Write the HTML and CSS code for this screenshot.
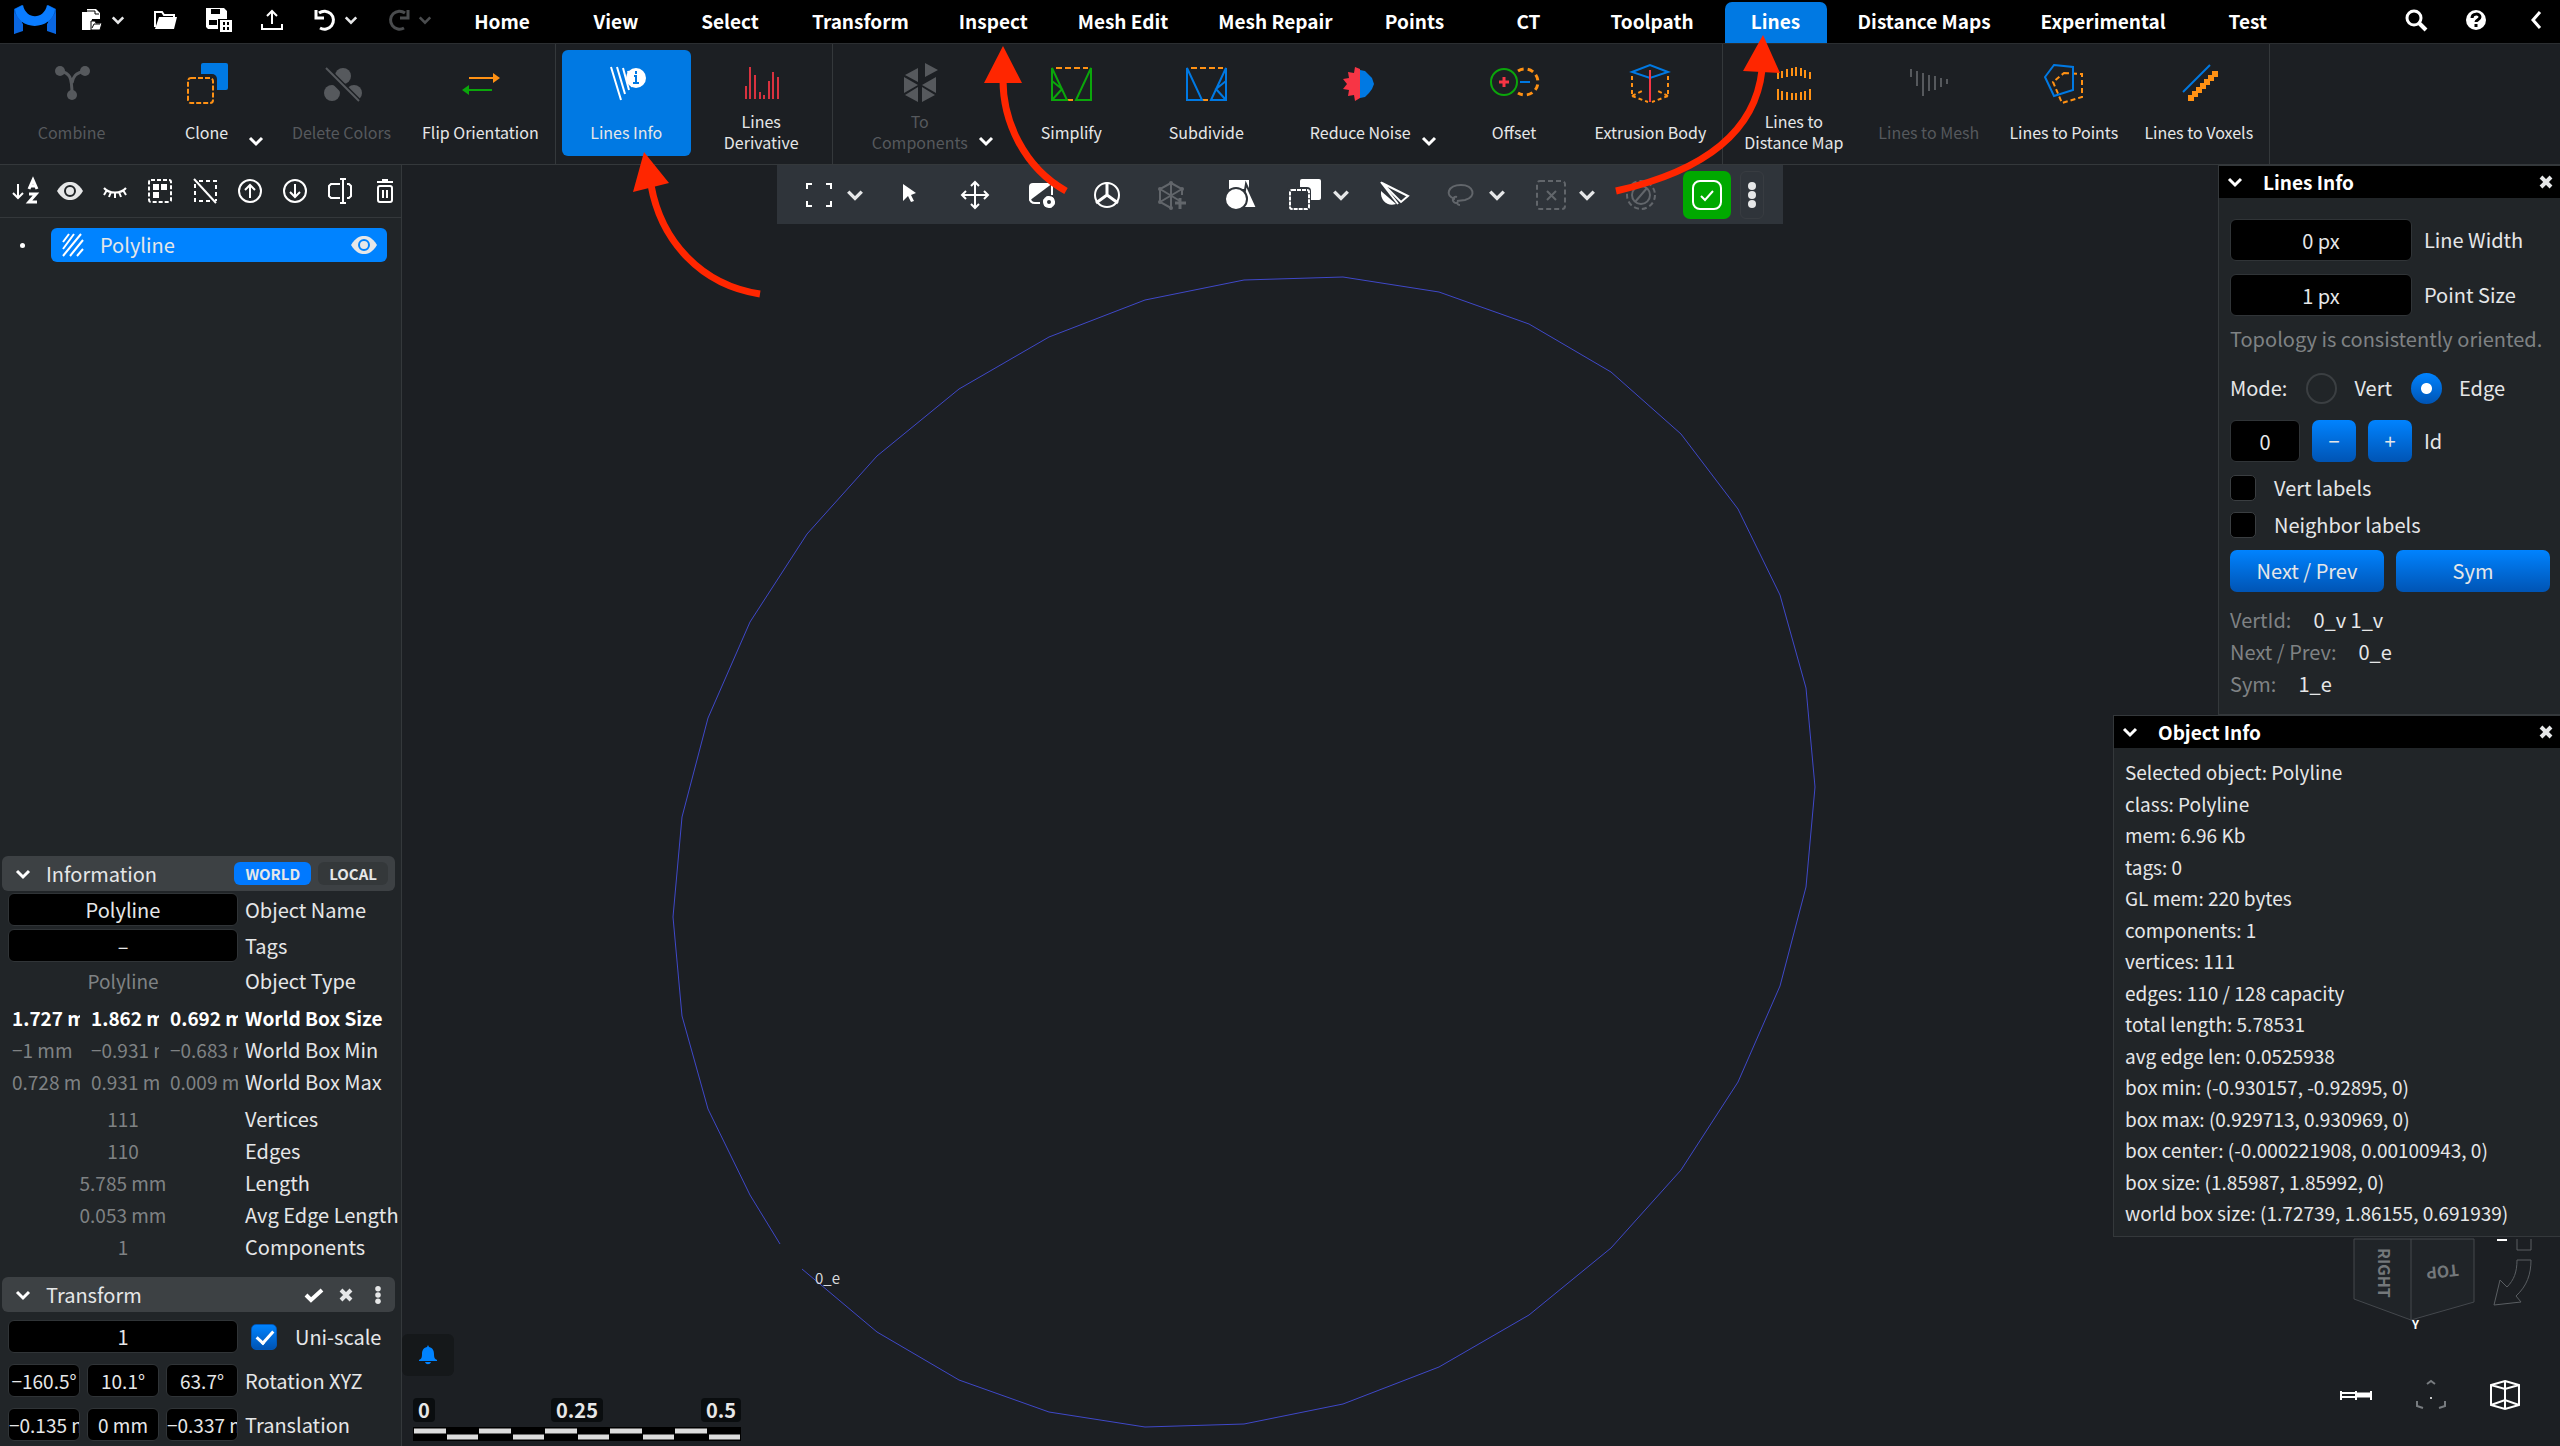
FILE: index.html
```html
<!DOCTYPE html>
<html lang="en">
  <head>
    <meta charset="UTF-8" />
    <meta name="viewport" content="width=device-width, initial-scale=1.0" />
    <title>MeshInspector</title>
    <link rel="stylesheet" href="styles.css">
  </head>
  <body>
    <!-- Shared symbols -->
    <svg class="defs" aria-hidden="true">
      <symbol id="chevron" viewBox="0 0 16 16"><path d="M2 5l6 6 6-6" fill="none" stroke="currentColor" stroke-width="3" /></symbol>
      <symbol id="close" viewBox="0 0 16 16"><path d="M3 3l10 10M13 3L3 13" fill="none" stroke="currentColor" stroke-width="4" /></symbol>
      <symbol id="dots" viewBox="0 0 10 26"><g fill="currentColor"><circle cx="5" cy="4" r="4" /><circle cx="5" cy="13" r="4" /><circle cx="5" cy="22" r="4" /></g></symbol>
      <symbol id="eye" viewBox="0 0 26 18"><path d="M0 9C5 1 9 0 13 0s8 1 13 9c-5 8-9 9-13 9S5 17 0 9z" fill="currentColor" /><circle cx="13" cy="9" r="5" fill="none" stroke="var(--eye-cut)" stroke-width="2" /></symbol>
    </svg>

    <div class="app">
      <header class="topbar">
        <a class="logo" href="#" aria-label="MeshInspector">
          <svg width="42" height="30" viewBox="0 0 42 30"><path d="M0 4L8 0v24L0 29zM42 4L34 0v24l8 5z" fill="#0057c2" /><path d="M1 4L9 0c3 15 21 15 24 0l8 4c-2 22-38 23-40 0z" fill="#0a7cff" /><path d="M0 7l9 12v7l-9 3zM42 7l-9 12v7l9 3z" fill="#0a66e0" /></svg>
        </a>
        <div class="quick">
          <button class="quick-btn" aria-label="Open recent"><svg width="22" height="24" viewBox="0 0 22 24"><path d="M6 1h9l4 4v6h-8l-1 11H1V4h5z" fill="#fff" /><path d="M6 3h8v3h4" fill="none" stroke="#000" /><path d="M10 13h4l1 2h6l-2 7h-9z" fill="#fff" stroke="#000" /><path d="M11 20l2-4h6" fill="none" stroke="#000" /></svg></button>
          <button class="quick-chev" aria-label="Recent files"><svg width="14" height="14"><use href="#chevron" /></svg></button>
          <button class="quick-btn wide" aria-label="Open"><svg width="24" height="20" viewBox="0 0 24 20"><path d="M1 17V2h7l2 3h10v3" fill="none" stroke="#fff" stroke-width="2" /><path d="M5 7h18l-3 12H1z" fill="#fff" /></svg></button>
          <button class="quick-btn wide" aria-label="Save"><svg width="28" height="26" viewBox="0 0 28 26"><path d="M1 1h18l3 3v8H13v10H3l-2-2z" fill="#fff" /><path d="M6 2h9v5H6zM4 13h8v5H4z" fill="#000" /><path d="M15 13h12v12H15z" fill="#fff" /><path d="M18 15h2v3h-2zM22 15h2v3h-2zM18 20h2v3h-2zM22 20h2v3h-2z" fill="#000" /></svg></button>
          <button class="quick-btn wide" aria-label="Export"><svg width="22" height="22" viewBox="0 0 22 22"><path d="M11 15V2M6 7l5-5 5 5M1 15v5h20v-5" fill="none" stroke="#fff" stroke-width="2" /></svg></button>
          <button class="quick-btn wide" aria-label="Undo"><svg width="24" height="24" viewBox="0 0 24 24"><path d="M6 5a9 9 0 1 1 1 15M3 2v8h8" fill="none" stroke="#fff" stroke-width="3" /></svg></button>
          <button class="quick-chev" aria-label="Undo history"><svg width="14" height="14"><use href="#chevron" /></svg></button>
          <button class="quick-btn wide off" aria-label="Redo" disabled><svg width="24" height="24" viewBox="0 0 24 24"><path d="M18 5a9 9 0 1 0-1 15M21 2v8h-8" fill="none" stroke="currentColor" stroke-width="3" /></svg></button>
          <button class="quick-chev off" aria-label="Redo history" disabled><svg width="14" height="14"><use href="#chevron" /></svg></button>
        </div>
        <nav class="tabs">
          <a href="#">Home</a>
          <a href="#">View</a>
          <a href="#">Select</a>
          <a href="#">Transform</a>
          <a href="#">Inspect</a>
          <a href="#">Mesh Edit</a>
          <a href="#">Mesh Repair</a>
          <a href="#">Points</a>
          <a href="#">CT</a>
          <a href="#">Toolpath</a>
          <a href="#" class="active">Lines</a>
          <a href="#">Distance Maps</a>
          <a href="#">Experimental</a>
          <a href="#">Test</a>
        </nav>
        <div class="top-right">
          <button aria-label="Search"><svg width="22" height="22" viewBox="0 0 22 22"><circle cx="9" cy="9" r="7" fill="none" stroke="#fff" stroke-width="3" /><path d="M14 14l7 7" stroke="#fff" stroke-width="4" /></svg></button>
          <button aria-label="Help"><svg width="22" height="22" viewBox="0 0 22 22"><circle cx="11" cy="11" r="10" fill="#fff" /><path d="M7 9c0-5 8-5 8-1 0 3-4 3-4 5M11 15v3" fill="none" stroke="#000" stroke-width="3" /></svg></button>
          <button aria-label="Collapse ribbon"><svg width="12" height="18" viewBox="0 0 12 18"><path d="M10 1L3 9l7 8" fill="none" stroke="#fff" stroke-width="3" /></svg></button>
        </div>
      </header>

      <section class="ribbon">
        <div class="group">
          <button class="tool" disabled>
            <svg viewBox="0 0 40 40"><g fill="currentColor"><circle cx="8" cy="8" r="5" /><circle cx="33" cy="8" r="5" /><circle cx="20" cy="32" r="5" /></g><path d="M8 8c10 2 12 6 12 24M33 8c-10 2-12 6-13 12" fill="none" stroke="currentColor" stroke-width="3" /></svg>
            <span>Combine</span>
          </button>
          <button class="tool drop">
            <svg viewBox="0 0 40 40"><rect x="14" y="0" width="27" height="27" rx="2" fill="#0079e3" /><rect x="-2" y="11" width="32" height="32" rx="5" fill="#1c1f23" /><rect x="1" y="15" width="25" height="25" rx="3" fill="none" stroke="#ff9114" stroke-width="2" stroke-dasharray="5 2" /></svg>
            <span>Clone</span>
            <svg class="more"><use href="#chevron" /></svg>
          </button>
          <button class="tool" disabled>
            <svg viewBox="0 0 40 40"><g fill="currentColor"><circle cx="10" cy="30" r="8" /><circle cx="21" cy="13" r="8" /><circle cx="32" cy="30" r="8" /></g><path d="M2 6l34 34" stroke="#1c1f23" stroke-width="9" /><path d="M4 5l33 33" stroke="currentColor" stroke-width="2" /></svg>
            <span>Delete Colors</span>
          </button>
          <button class="tool">
            <svg viewBox="0 0 40 40"><path d="M9 15h26" stroke="#ff9114" stroke-width="2" /><path d="M33 10l7 5-7 5z" fill="#ff9114" /><path d="M8 27h24" stroke="#0ba60b" stroke-width="2" /><path d="M9 22l-7 5 7 5z" fill="#0ba60b" /></svg>
            <span>Flip Orientation</span>
          </button>
        </div>
        <div class="group">
          <button class="tool active">
            <svg viewBox="0 0 40 40"><path d="M5 4l10 33M11 4l8 27M17 5l6 22M22 8l4 16" stroke="#fff" stroke-width="2" /><circle cx="30" cy="15" r="10" fill="#fff" /><path d="M30 8v3M28 13h2v7M27 20h6" fill="none" stroke="#0079e3" stroke-width="2" /></svg>
            <span>Lines Info</span>
          </button>
          <button class="tool">
            <svg viewBox="0 0 40 40"><path d="M5 36V23M9 36V4M14 36V12M19 36v-7M23 36v-4M28 36V18M32 36V9M37 36V14" stroke="#d8323f" stroke-width="2" /></svg>
            <span>Lines<br>Derivative</span>
          </button>
        </div>
        <div class="group">
          <button class="tool drop" disabled>
            <svg viewBox="0 0 40 40"><path d="M18 5v14L5 12zM4 14l14 8-14 8zM5 32l13-8v15zM22 39V24l13 8zM36 30l-14-8 14-8zM25 0l13 7-13 7z" fill="currentColor" /></svg>
            <span>To<br>Components</span>
            <svg class="more"><use href="#chevron" /></svg>
          </button>
          <button class="tool">
            <svg viewBox="0 0 40 40"><g fill="none" stroke-width="2"><path d="M5 5h32M16 37h9" stroke="#ff9114" stroke-dasharray="6 3" /><path d="M1 5v32h15zM1 18l10 8L1 37M40 5v32H25z" stroke="#0ba60b" /></g></svg>
            <span>Simplify</span>
          </button>
          <button class="tool">
            <svg viewBox="0 0 40 40"><g fill="none" stroke-width="2"><path d="M5 5h32M16 37h9" stroke="#ff9114" stroke-dasharray="6 3" /><path d="M1 5v32h15zM40 18l-10 8 10 11M40 5v32H25z" stroke="#0079e3" /></g></svg>
            <span>Subdivide</span>
          </button>
          <button class="tool drop">
            <svg viewBox="0 0 40 40"><path d="M20 6l-5-2-1 6-6-1 1 6-6 1 4 5-4 5 6 1-1 6 6-1 1 6 5-3z" fill="#f73545" /><path d="M20 7l5 1 4 4 3 3 2 6-2 5-3 4-4 4-5 1z" fill="#0079e3" /></svg>
            <span>Reduce Noise</span>
            <svg class="more"><use href="#chevron" /></svg>
          </button>
          <button class="tool">
            <svg viewBox="0 0 40 40"><g fill="none"><circle cx="10" cy="19" r="13" stroke="#0ba60b" stroke-width="2" /><path d="M10 14v10M5 19h10" stroke="#f73545" stroke-width="3" /><path d="M24 8a13 13 0 1 1 0 22" stroke="#ff9114" stroke-width="3" stroke-dasharray="6 4" /><path d="M26 19h10" stroke="#0079e3" stroke-width="2" /></g></svg>
            <span>Offset</span>
          </button>
          <button class="tool">
            <svg viewBox="0 0 40 40"><g fill="none" stroke-width="2"><path d="M2 13v20M38 13v20M2 33l16 6M38 33l-16 6M2 33l12-6M38 33l-12-6" stroke="#ff9114" stroke-dasharray="4 3" /><path d="M2 9l18-7 18 7-18 6z" stroke="#0079e3" /><path d="M20 7v32" stroke="#f73545" /></g></svg>
            <span>Extrusion Body</span>
          </button>
        </div>
        <div class="group">
          <button class="tool">
            <svg viewBox="0 0 40 40"><path d="M4 9v7M8 8v7M13 6v8M18 5v8M22 4v9M27 5v8M31 7v8M36 9v7M4 26v11M8 28v9M13 29v8M18 30v7M22 30v7M27 29v8M31 28v9M36 26v11" stroke="#ff9114" stroke-width="2" /></svg>
            <span>Lines to<br>Distance Map</span>
          </button>
          <button class="tool" disabled>
            <svg viewBox="0 0 40 40"><path d="M2 6v8M8 8v15M14 10v23M20 12v16M26 13v14M32 15v9M38 16v5" stroke="currentColor" stroke-width="2" /></svg>
            <span>Lines to Mesh</span>
          </button>
          <button class="tool">
            <svg viewBox="0 0 40 40"><g fill="none" stroke-width="2"><path d="M20 10l18 1v23l-20 6-9-21z" stroke="#ff9114" stroke-dasharray="5 3" /><path d="M10 2l19 2v23l-19 6L1 14z" stroke="#0079e3" /></g></svg>
            <span>Lines to Points</span>
          </button>
          <button class="tool">
            <svg viewBox="0 0 40 40"><path d="M4 29L31 2" stroke="#0079e3" stroke-width="2" /><path d="M9 38v-6h4v-4h4v-4h4v-4h4v-4h4v-4h4V8h6v6h-4v4h-4v4h-4v4h-4v4h-4v4h-4v4z" fill="#ff9114" /></svg>
            <span>Lines to Voxels</span>
          </button>
        </div>
      </section>

      <div class="main">
        <aside class="side">
          <div class="side-tools">
            <button aria-label="Sort"><svg viewBox="0 0 26 26"><path d="M6 6v14M1 15l5 5 5-5" fill="none" stroke="#fff" stroke-width="2" /><path d="M17 11l4-9 4 9M18 8h6M17 16h7l-7 8h8" fill="none" stroke="#fff" stroke-width="3" /></svg></button>
            <button aria-label="Show all"><svg viewBox="0 0 26 18"><use href="#eye" /></svg></button>
            <button aria-label="Hide all"><svg viewBox="0 0 26 26"><path d="M2 10c5 6 17 6 22 0M5 12l-3 5M9 14l-2 5M13 15v5M17 14l2 5M21 12l3 5" fill="none" stroke="#fff" stroke-width="2" /></svg></button>
            <button aria-label="Select all"><svg viewBox="0 0 26 26"><rect x="2" y="2" width="22" height="22" rx="2" fill="none" stroke="#fff" stroke-width="2" stroke-dasharray="4 2" /><path d="M6 6h6v6H6zM14 6h6v6h-6zM6 14h6v6H6z" fill="#fff" /></svg></button>
            <button aria-label="Unselect all"><svg viewBox="0 0 26 26"><path d="M7 3h17v20M3 6v17h18" fill="none" stroke="#fff" stroke-width="2" stroke-dasharray="4 3" /><path d="M2 1l22 24" stroke="#fff" stroke-width="2" /></svg></button>
            <button aria-label="Previous"><svg viewBox="0 0 26 26"><circle cx="13" cy="13" r="11" fill="none" stroke="#fff" stroke-width="2" /><path d="M13 20V7M8 12l5-5 5 5" fill="none" stroke="#fff" stroke-width="2" /></svg></button>
            <button aria-label="Next"><svg viewBox="0 0 26 26"><circle cx="13" cy="13" r="11" fill="none" stroke="#fff" stroke-width="2" /><path d="M13 6v13M8 14l5 5 5-5" fill="none" stroke="#fff" stroke-width="2" /></svg></button>
            <button aria-label="Rename"><svg viewBox="0 0 26 26"><path d="M13 6H4L2 8v10l2 2h9M20 6h2l2 2v10l-2 2h-2M13 1h6M13 25h6M16 1v24" fill="none" stroke="#fff" stroke-width="2" /></svg></button>
            <button aria-label="Delete"><svg viewBox="0 0 26 26"><path d="M5 4h16M10 2h6" stroke="#fff" stroke-width="2" /><rect x="6" y="8" width="14" height="16" rx="2" fill="none" stroke="#fff" stroke-width="2" /><path d="M11 12v8M15 12v8" stroke="#fff" stroke-width="2" /></svg></button>
          </div>

          <ul class="tree">
            <li>
              <a class="node" href="#">
                <svg width="24" height="24" viewBox="0 0 24 24"><path d="M2 9l6-8M2 16L13 1M2 23L20 1M9 23L22 7M16 23l6-7" stroke="#fff" stroke-width="2" /></svg>
                <span>Polyline</span>
                <svg class="node-eye" width="26" height="18"><use href="#eye" /></svg>
              </a>
            </li>
          </ul>

          <section class="section">
            <div class="section-head">
              <svg class="chev"><use href="#chevron" /></svg>
              <h2>Information</h2>
              <button class="pill on">WORLD</button>
              <button class="pill">LOCAL</button>
            </div>
            <div class="props">
              <div class="prop"><input id="obj-name" type="text" value="Polyline"><label for="obj-name">Object Name</label></div>
              <div class="prop"><input id="obj-tags" type="text" value="–"><label for="obj-tags">Tags</label></div>
              <div class="prop"><span class="val">Polyline</span><span>Object Type</span></div>
            </div>
            <div class="stats">
              <div class="prop strong"><span class="triple"><span>1.727 mm</span><span>1.862 mm</span><span>0.692 mm</span></span><span>World Box Size</span></div>
              <div class="prop"><span class="triple"><span>−1 mm</span><span>−0.931 mm</span><span>−0.683 mm</span></span><span>World Box Min</span></div>
              <div class="prop"><span class="triple"><span>0.728 mm</span><span>0.931 mm</span><span>0.009 mm</span></span><span>World Box Max</span></div>
            </div>
            <div class="stats">
              <div class="prop"><span class="val">111</span><span>Vertices</span></div>
              <div class="prop"><span class="val">110</span><span>Edges</span></div>
              <div class="prop"><span class="val">5.785 mm</span><span>Length</span></div>
              <div class="prop"><span class="val">0.053 mm</span><span>Avg Edge Length</span></div>
              <div class="prop"><span class="val">1</span><span>Components</span></div>
            </div>
          </section>

          <section class="section transform">
            <div class="section-head">
              <svg class="chev"><use href="#chevron" /></svg>
              <h2>Transform</h2>
              <button class="mini" aria-label="Apply"><svg width="18" height="16" viewBox="0 0 18 16"><path d="M1 8l5 5L17 3" fill="none" stroke="#fff" stroke-width="4" /></svg></button>
              <button class="mini" aria-label="Reset"><svg width="16" height="16"><use href="#close" /></svg></button>
              <button class="mini" aria-label="More"><svg width="8" height="18"><use href="#dots" /></svg></button>
            </div>
            <div class="fields">
              <div class="prop"><input type="text" value="1" aria-label="Scale"><label class="check"><input type="checkbox" checked>Uni-scale</label></div>
              <div class="prop">
                <span class="triple"><input type="text" value="−160.5°" aria-label="Rotation X"><input type="text" value="10.1°" aria-label="Rotation Y"><input type="text" value="63.7°" aria-label="Rotation Z"></span>
                <span>Rotation XYZ</span>
              </div>
              <div class="prop">
                <span class="triple"><input type="text" value="−0.135 mm" aria-label="Translation X"><input type="text" value="0 mm" aria-label="Translation Y"><input type="text" value="−0.337 mm" aria-label="Translation Z"></span>
                <span>Translation</span>
              </div>
            </div>
          </section>
        </aside>

        <main class="viewport">
          <div class="corner">
            <button class="bell" aria-label="Notifications"><svg width="18" height="20" viewBox="0 0 18 20"><path d="M9 0l1 2c4 1 5 4 5 7 0 4 1 5 3 6v1H0v-1c2-1 3-2 3-6 0-3 1-6 5-7zM6 17h6c-1 3-5 3-6 0z" fill="#0083ff" /></svg></button>
            <div class="scale">
              <div class="scale-labels"><span>0</span><span>0.25</span><span>0.5</span></div>
              <svg width="328" height="14" viewBox="0 0 328 14"><path d="M0 0h328v14H0z" fill="#000" /><path d="M1 4h32M66 4h32M132 4h32M197 4h32M262 4h32M34 10h31M100 10h31M165 10h31M230 10h31M296 10h31" stroke="#dcdcdc" stroke-width="5" /></svg>
            </div>
          </div>

          <svg class="cube" width="200" height="90" viewBox="0 0 200 90">
            <g fill="#202428" stroke="#44484d"><path d="M14 0v60l57 21V0zM71 81l63-18V0H71" /><path d="M177 0v11h14V0M177 21h14c0 14-4 26-15 36l5 6-27 3 6-25 7 7c7-7 10-15 10-27z" fill="none" stroke="#5a5e62" /></g>
            <text class="face" transform="translate(38 9) rotate(90)">RIGHT</text>
            <text class="face" transform="translate(118 25) rotate(174)">TOP</text>
            <text class="axis" x="72" y="90">Y</text>
            <path d="M157 1h10" stroke="#fff" stroke-width="2" />
          </svg>
          <div class="view-tools">
            <button aria-label="Ruler"><svg width="32" height="30" viewBox="0 0 32 30"><path d="M1 11v9M16 11v9M31 11v9M1 13h15M1 17h15" stroke="#fff" stroke-width="2" /><path d="M16 15h15" stroke="#fff" stroke-width="5" /></svg></button>
            <button aria-label="Autorotate"><svg width="30" height="30" viewBox="0 0 30 30"><path d="M11 4l4-3 4 3M1 21v5l6 2M29 21v5l-6 2" fill="none" stroke="#777b7f" stroke-width="2" /><circle cx="15" cy="18" r="1" fill="#fff" /></svg></button>
            <button aria-label="Perspective"><svg width="30" height="30" viewBox="0 0 30 30"><path d="M15 1l14 4v20l-14 4-14-4V5zM1 5l14 4 14-4M1 25l14-5 14 5M15 1v28" fill="none" stroke="#fff" stroke-width="2" /></svg></button>
          </div>
        </main>

        <div class="windows">
          <section class="window lines-info">
            <div class="window-head"><svg class="chev"><use href="#chevron" /></svg><h2>Lines Info</h2><button aria-label="Close Lines Info"><svg width="16" height="16"><use href="#close" /></svg></button></div>
            <div class="window-body">
              <div class="line"><input id="line-width" class="long" type="text" value="0 px"><label for="line-width">Line Width</label></div>
              <div class="line"><input id="point-size" class="long" type="text" value="1 px"><label for="point-size">Point Size</label></div>
              <p class="muted note">Topology is consistently oriented.</p>
              <div class="modes"><span>Mode:</span><label><input type="radio" name="mode">Vert</label><label><input type="radio" name="mode" checked>Edge</label></div>
              <div class="line"><input id="edge-id" class="short" type="text" value="0"><button class="btn step">−</button><button class="btn step">+</button><label for="edge-id">Id</label></div>
              <div class="checks">
                <label class="check"><input type="checkbox">Vert labels</label>
                <label class="check"><input type="checkbox">Neighbor labels</label>
              </div>
              <div class="line"><button class="btn">Next / Prev</button><button class="btn">Sym</button></div>
              <dl class="ids">
                <div><dt>VertId:</dt><dd>0_v 1_v</dd></div>
                <div><dt>Next / Prev:</dt><dd>0_e</dd></div>
                <div><dt>Sym:</dt><dd>1_e</dd></div>
              </dl>
            </div>
          </section>
          <section class="window object-info">
            <div class="window-head"><svg class="chev"><use href="#chevron" /></svg><h2>Object Info</h2><button aria-label="Close Object Info"><svg width="16" height="16"><use href="#close" /></svg></button></div>
            <ul class="info-list">
              <li>Selected object: Polyline</li>
              <li>class: Polyline</li>
              <li>mem: 6.96 Kb</li>
              <li>tags: 0</li>
              <li>GL mem: 220 bytes</li>
              <li>components: 1</li>
              <li>vertices: 111</li>
              <li>edges: 110 / 128 capacity</li>
              <li>total length: 5.78531</li>
              <li>avg edge len: 0.0525938</li>
              <li>box min: (-0.930157, -0.92895, 0)</li>
              <li>box max: (0.929713, 0.930969, 0)</li>
              <li>box center: (-0.000221908, 0.00100943, 0)</li>
              <li>box size: (1.85987, 1.85992, 0)</li>
              <li>world box size: (1.72739, 1.86155, 0.691939)</li>
            </ul>
          </section>
        </div>

        <div class="toolbar">
          <span class="pair">
            <button aria-label="Fit"><svg viewBox="0 0 30 30"><path d="M3 9V4h5M22 4h5v5M27 21v5h-5M8 26H3v-5" fill="none" stroke="#fff" stroke-width="2" /></svg></button>
            <button class="arrow" aria-label="Fit options"><svg><use href="#chevron" /></svg></button>
          </span>
          <button aria-label="Pick"><svg viewBox="0 0 30 30"><path d="M9 4l13 9-5 2 3 6-3 1-3-6-5 5z" fill="#fff" /></svg></button>
          <button aria-label="Move"><svg viewBox="0 0 30 30"><path d="M15 3v24M3 15h24M11 6l4-4 4 4M11 24l4 4 4-4M6 11l-4 4 4 4M24 11l4 4-4 4" fill="none" stroke="#fff" stroke-width="2" /></svg></button>
          <button aria-label="Viewer settings"><svg viewBox="0 0 30 30"><path d="M3 7q0-4 4-4h20L3 21z" fill="#fff" /><path d="M4 18q0 5 5 5h5M26 4v11" fill="none" stroke="#fff" stroke-width="2" /><circle cx="23" cy="22" r="4" fill="none" stroke="#fff" stroke-width="4" /><circle cx="23" cy="22" r="5" fill="none" stroke="#fff" stroke-width="2" stroke-dasharray="3 2" /></svg></button>
          <button aria-label="Directions"><svg viewBox="0 0 30 30"><circle cx="15" cy="15" r="12" fill="none" stroke="#fff" stroke-width="2" /><path d="M15 2v13L4 23M15 15l11 8" fill="none" stroke="#fff" stroke-width="3" /></svg></button>
          <button aria-label="Add mesh" class="off"><svg viewBox="0 0 30 30"><path d="M13 3l11 6v6M13 3L2 9v13l11 6M13 3v25M2 9l20 12M24 9L2 22" fill="none" stroke="currentColor" stroke-width="2" /><g fill="currentColor"><circle cx="13" cy="3" r="2" /><circle cx="24" cy="9" r="2" /><circle cx="2" cy="9" r="2" /><circle cx="2" cy="22" r="2" /><circle cx="13" cy="28" r="2" /></g><path d="M22 18v11M17 23h11" stroke="currentColor" stroke-width="3" /></svg></button>
          <button aria-label="Primitives"><svg viewBox="0 0 30 30"><path d="M5 0h20v9H5z" fill="#fff" /><path d="M22 4l11 24H18z" fill="#fff" stroke="#2f343a" stroke-width="2" /><circle cx="12" cy="19" r="11" fill="#fff" stroke="#2f343a" stroke-width="2" /></svg></button>
          <span class="pair">
            <button aria-label="Clone"><svg viewBox="0 0 30 30"><rect x="10" y="-1" width="21" height="21" rx="2" fill="#fff" /><rect x="-3" y="7" width="24" height="24" rx="4" fill="#2f343a" /><rect x="0" y="10" width="19" height="19" rx="2" fill="none" stroke="#fff" stroke-width="2" stroke-dasharray="4 1" /></svg></button>
            <button class="arrow" aria-label="Clone options"><svg><use href="#chevron" /></svg></button>
          </span>
          <button aria-label="Section"><svg viewBox="0 0 30 30"><path d="M1 11c-1 10 7 16 15 13z" fill="#fff" /><path d="M2 3l26 13-7 6z" fill="none" stroke="#fff" stroke-width="2" /><path d="M1 2l17 22" stroke="#fff" stroke-width="2" /></svg></button>
          <span class="pair">
            <button aria-label="Lasso" class="off"><svg viewBox="0 0 30 30"><path d="M9 19C-2 16 2 5 15 5s16 12 4 15l-8 1M11 17a3 3 0 1 0 1 5c-1 1-1 3 2 3" fill="none" stroke="currentColor" stroke-width="2" /></svg></button>
            <button class="arrow" aria-label="Lasso options"><svg><use href="#chevron" /></svg></button>
          </span>
          <span class="pair">
            <button aria-label="Deselect" class="off"><svg viewBox="0 0 30 30"><rect x="1" y="1" width="28" height="28" rx="3" fill="none" stroke="currentColor" stroke-width="2" stroke-dasharray="5 3" /><path d="M11 11l9 9M20 11l-9 9" stroke="currentColor" stroke-width="2" /></svg></button>
            <button class="arrow" aria-label="Deselect options"><svg><use href="#chevron" /></svg></button>
          </span>
          <button aria-label="Forbid" class="off"><svg viewBox="0 0 30 30"><circle cx="15" cy="15" r="14" fill="none" stroke="currentColor" stroke-width="2" stroke-dasharray="5 3" /><circle cx="15" cy="15" r="9" fill="none" stroke="currentColor" stroke-width="2" /><path d="M9 22L21 8" stroke="currentColor" stroke-width="2" /></svg></button>
          <button aria-label="Confirm" class="go"><svg viewBox="0 0 30 30"><rect x="1" y="1" width="28" height="28" rx="7" fill="none" stroke="#fff" stroke-width="2" /><path d="M9 16l4 4 8-9" fill="none" stroke="#fff" stroke-width="2" /></svg></button>
          <button class="kebab" aria-label="More"><svg width="10" height="26"><use href="#dots" /></svg></button>
        </div>
      </div>

      <!-- Polyline object -->
      <svg class="scene" width="2560" height="1446" viewBox="0 0 2560 1446">
        <polyline fill="none" stroke="#3f48c8" points="802,1269 877,1332 959,1380 1049,1412 1145,1427 1244,1424 1343,1404 1439,1367 1529,1315 1611,1248 1681,1170 1738,1082 1780,986 1806,887 1815,787 1806,688 1780,595 1738,509 1681,434 1611,372 1529,324 1439,292 1343,277 1244,280 1145,300 1049,337 959,389 877,456 807,534 750,622 708,718 682,817 673,917 682,1016 708,1109 750,1195 780,1244" />
        <text x="815" y="1284">0_e</text>
      </svg>

      <!-- Arrows -->
      <svg class="scene arrows" width="2560" height="1446" viewBox="0 0 2560 1446">
        <g fill="none" stroke="#ff2600" stroke-width="7"><path d="M651 185c10 56 50 100 109 109" /><path d="M1003 80c0 40 20 87 63 111" /><path d="M1762 70c-7 65-62 102-146 121" /></g>
        <path d="M644 152l25 31-36 9zM1003 46l19 37h-38zM1763 35l17 38-37-2z" fill="#ff2600" />
      </svg>
    </div>
  </body>
</html>
```

FILE: styles.css
```css
* {
  margin: 0;
  padding: 0;
  box-sizing: border-box;
}

:root {
  --bg: #1c1f23;
  --panel: #212528;
  --line: #34383b;
  --blue: #0083ff;
  --text: #e6e7e8;
  --muted: #7f8284;
  --eye-cut: #212528;
}

body {
  font-family: "Noto Sans CJK SC", "Noto Sans", sans-serif;
  font-size: 20px;
  line-height: 32px;
  background: var(--bg);
  color: var(--text);
  overflow: hidden;
}

button,
input {
  font: inherit;
  color: inherit;
  background: none;
  border: 0;
}

button {
  display: flex;
  align-items: center;
  justify-content: center;
}

a {
  color: inherit;
  text-decoration: none;
}

ul {
  list-style: none;
}

svg {
  display: block;
  flex-shrink: 0;
  overflow: visible;
}

h2 {
  font-size: 20px;
  font-weight: 400;
}

.defs {
  position: absolute;
  width: 0;
  height: 0;
}

.app {
  height: 100vh;
  display: flex;
  flex-direction: column;
  position: relative;
}

/* Top bar */
.topbar {
  display: flex;
  align-items: stretch;
  height: 44px;
  padding: 0 12px 0 14px;
  background: #000;
  border-bottom: 1px solid #2b2e31;
}

.logo {
  padding-top: 5px;
}

.quick {
  display: flex;
  align-items: center;
  width: 395px;
  padding: 0 0 4px 23px;
}

.quick-btn {
  width: 26px;
}

.quick-btn.wide {
  width: 53px;
}

.quick-chev {
  width: 26px;
}

.quick .wide + .quick-chev {
  margin-left: -13px;
}

.quick-chev + .wide {
  margin-left: 8px;
}

.off {
  color: #4a4c4e;
}

.tabs {
  display: flex;
  gap: 12px;
  padding-top: 2px;
}

.tabs a {
  min-width: 102px;
  padding: 3px 19px;
  border-radius: 7px 7px 0 0;
  text-align: center;
  font-size: 19px;
  font-weight: 600;
  color: #fff;
  white-space: nowrap;
}

.tabs .active {
  background: #0079e3;
}

.top-right {
  display: flex;
  align-items: center;
  gap: 36px;
  margin-left: auto;
  padding-bottom: 4px;
}

.top-right button {
  width: 24px;
}

/* Ribbon */
.ribbon {
  display: flex;
  height: 121px;
  padding-left: 1px;
  border-bottom: 1px solid var(--line);
}

.group {
  display: flex;
  gap: 6px;
  padding: 6px 6px 8px;
  border-right: 1px solid var(--line);
}

.tool {
  position: relative;
  flex-direction: column;
  justify-content: flex-start;
  gap: 8px;
  min-width: 129px;
  padding: 13px 10px 0;
  border-radius: 6px;
  font-size: 16px;
  line-height: 21px;
}

.tool svg {
  width: 40px;
  height: 40px;
}

.tool span {
  display: flex;
  align-items: center;
  min-height: 42px;
  text-align: center;
  white-space: nowrap;
}

.tool.drop {
  padding: 13px 33px 0;
}

.tool .more {
  position: absolute;
  right: 7px;
  bottom: 7px;
  width: 16px;
  height: 16px;
  color: #fff;
}

.tool:disabled {
  color: #56595d;
}

.tool.active {
  background: #0079e3;
}

.main {
  display: flex;
  flex: 1;
  min-height: 0;
  position: relative;
}

/* Left panel */
.side {
  display: flex;
  flex-direction: column;
  width: 402px;
  background: var(--panel);
  border-right: 1px solid var(--line);
}

.side-tools {
  display: flex;
  padding-left: 2px;
  height: 53px;
  border-bottom: 1px solid var(--line);
  overflow: hidden;
}

.side-tools button {
  flex-shrink: 0;
  width: 45px;
}

.side-tools svg {
  width: 26px;
  height: 26px;
}

.tree {
  flex: 1;
  padding: 10px 14px 0 20px;
}

.tree li {
  display: flex;
  align-items: center;
}

.tree li::before {
  content: "";
  width: 5px;
  height: 5px;
  margin-right: 26px;
  border-radius: 50%;
  background: #fff;
}

.node {
  --eye-cut: #0083ff;
  display: flex;
  flex: 1;
  align-items: center;
  gap: 15px;
  height: 34px;
  padding: 0 10px;
  border-radius: 6px;
  background: var(--blue);
}

.node-eye {
  margin-left: auto;
}

.section-head {
  display: flex;
  align-items: center;
  height: 35px;
  margin: 0 6px 2px 2px;
  padding: 0 7px 0 13px;
  border-radius: 6px;
  background: #3d4144;
}

.section-head h2 {
  margin: 0 auto 0 15px;
}

.chev {
  width: 16px;
  height: 16px;
  color: #fff;
}

.pill {
  height: 23px;
  margin-left: 7px;
  padding: 0 11px;
  border-radius: 6px;
  background: #34383a;
  font-size: 15px;
  font-weight: 600;
}

.pill.on {
  background: #0079ff;
}

.mini {
  width: 32px;
}

.props {
  display: grid;
  gap: 3px;
  margin-bottom: 5px;
}

.prop {
  display: grid;
  grid-template-columns: 230px 1fr;
  gap: 7px;
  padding-left: 8px;
  align-items: center;
  white-space: nowrap;
}

.prop input[type="text"],
.line input {
  width: 100%;
  min-width: 0;
  height: 33px;
  border: 1px solid #303437;
  border-radius: 6px;
  background: #000;
  text-align: center;
}

.val,
.triple {
  font-size: 19px;
  color: var(--muted);
}

.val {
  text-align: center;
}

.triple {
  display: grid;
  grid-template-columns: repeat(3, 1fr);
  gap: 7px;
}

.triple span {
  padding-left: 4px;
  overflow: hidden;
}

.triple input {
  color: var(--text);
}

.strong,
.strong .triple {
  font-size: 19px;
  font-weight: 700;
  color: #fff;
}

.stats {
  margin-bottom: 5px;
}

.transform .section-head {
  margin-top: 9px;
  padding-right: 1px;
}

.fields {
  display: grid;
  gap: 11px;
  padding: 6px 0 5px;
}

.check {
  display: flex;
  align-items: center;
  gap: 18px;
}

.prop .check {
  padding-left: 6px;
}

input[type="checkbox"] {
  appearance: none;
  width: 26px;
  height: 26px;
  border: 1px solid #3a3e41;
  border-radius: 5px;
  background: #000;
}

input[type="checkbox"]:checked {
  border-color: #0057b8;
  background: linear-gradient(#0083ff, #0054b4);
}

input[type="checkbox"]:checked::before {
  content: "";
  display: block;
  width: 7px;
  height: 14px;
  margin: 2px 0 0 8px;
  border: solid #fff;
  border-width: 0 3px 3px 0;
  transform: rotate(42deg);
}

/* Viewport */
.viewport {
  flex: 1;
  position: relative;
}

.corner {
  position: absolute;
  left: 0;
  bottom: 5px;
}

.bell {
  width: 52px;
  height: 42px;
  border-radius: 6px;
  background: #15181a;
}

.scale {
  width: 328px;
  margin: 22px 0 0 11px;
}

.scale-labels {
  display: grid;
  grid-template-columns: repeat(3, 1fr);
  justify-items: center;
  margin-bottom: 5px;
  font-weight: 600;
  line-height: 24px;
}

.scale-labels span {
  padding: 0 5px;
  border-radius: 4px;
  background: #0a0d0f;
}

.scale-labels span:first-child {
  justify-self: start;
}

.scale-labels span:last-child {
  justify-self: end;
}

.cube {
  position: absolute;
  right: 20px;
  bottom: 117px;
}

.face {
  font-size: 16px;
  font-weight: 600;
  fill: #74787b;
  stroke: none;
}

.axis {
  font-size: 12px;
  font-weight: 700;
  fill: #fff;
}

.view-tools {
  position: absolute;
  right: 40px;
  bottom: 36px;
  display: flex;
  gap: 44px;
}

/* Floating toolbar */
.toolbar {
  position: absolute;
  top: 0;
  left: 0;
  right: 0;
  width: max-content;
  margin: 0 auto;
  display: flex;
  align-items: center;
  gap: 18px;
  height: 59px;
  padding: 0 19px 0 18px;
  background: #2f343a;
}

.toolbar button {
  width: 48px;
  height: 48px;
}

.toolbar svg {
  width: 30px;
  height: 30px;
}

.toolbar .off {
  color: #62666b;
}

.pair {
  display: flex;
}

.toolbar .arrow {
  width: 24px;
}

.toolbar .arrow svg {
  width: 18px;
  height: 18px;
}

.toolbar .go {
  border-radius: 7px;
  background: #00a900;
}

.toolbar .kebab {
  width: 24px;
  margin-left: -9px;
  border: 1px solid #383c41;
  border-radius: 6px;
}

.toolbar .kebab svg {
  width: 10px;
  height: 26px;
}

/* Floating windows */
.windows {
  position: absolute;
  top: 0;
  right: 0;
  display: flex;
  flex-direction: column;
  align-items: flex-end;
}

.window {
  border: 1px solid var(--line);
  border-right: 0;
  background: var(--panel);
}

.window-head {
  display: flex;
  align-items: center;
  gap: 20px;
  height: 32px;
  padding: 0 6px 0 8px;
  background: #000;
}

.window-head h2 {
  font-size: 19px;
  font-weight: 600;
  color: #fff;
}

.window-head button {
  margin-left: auto;
}

.lines-info {
  width: 342px;
}

.object-info {
  width: 447px;
}

.window-body {
  padding: 21px 10px 14px 11px;
}

.line {
  display: flex;
  align-items: center;
  gap: 12px;
  margin-bottom: 13px;
}

.line input {
  height: 42px;
}

.line .long {
  width: 182px;
}

.line .short {
  width: 70px;
}

.muted,
.ids dt {
  color: var(--muted);
}

.note {
  margin: -6px 0 17px;
}

.modes {
  display: flex;
  align-items: center;
  gap: 19px;
  margin-bottom: 16px;
}

.modes label {
  display: flex;
  align-items: center;
  gap: 17px;
}

input[type="radio"] {
  appearance: none;
  width: 31px;
  height: 31px;
  border: 2px solid #3b3f42;
  border-radius: 50%;
}

input[type="radio"]:checked {
  border: 0;
  background: radial-gradient(circle, #fff 5px, transparent 6px), linear-gradient(#0083ff, #0054b4);
}

.btn {
  flex: 1;
  height: 42px;
  border-radius: 7px;
  background: linear-gradient(#0083ff, #0054b4);
}

.btn.step {
  flex: none;
  width: 44px;
}

.checks {
  display: grid;
  gap: 5px;
  margin: -3px 0 9px;
}

.ids {
  margin-top: -1px;
}

.ids div {
  display: flex;
  gap: 22px;
}

.info-list {
  display: flex;
  flex-direction: column;
  justify-content: space-between;
  min-height: 488px;
  padding: 8px 11px;
  font-size: 19px;
  line-height: 31px;
}

/* Canvas layers */
.scene {
  position: absolute;
  top: 0;
  left: 0;
  pointer-events: none;
}

.scene text {
  font-size: 15px;
  fill: #d8dadc;
}
```
